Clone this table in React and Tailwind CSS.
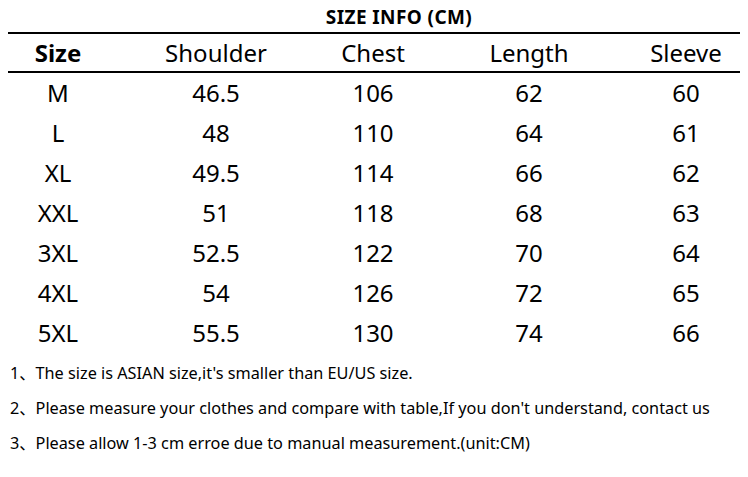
import React from 'react'

const rows = [
  ['M', '46.5', '106', '62', '60'],
  ['L', '48', '110', '64', '61'],
  ['XL', '49.5', '114', '66', '62'],
  ['XXL', '51', '118', '68', '63'],
  ['3XL', '52.5', '122', '70', '64'],
  ['4XL', '54', '126', '72', '65'],
  ['5XL', '55.5', '130', '74', '66'],
]

const headers = ['Size', 'Shoulder', 'Chest', 'Length', 'Sleeve']

const notes = [
  "1、The size is ASIAN size,it's smaller than EU/US size.",
  "2、Please measure your clothes and compare with table,If you don't understand, contact us",
  '3、Please allow 1-3 cm erroe due to manual measurement.(unit:CM)',
]

const cols = 'grid grid-cols-[100px_216px_98px_214px_100px]'

export default function App() {
  return (
    <div
      className="w-[748px] h-[477px] bg-white text-black overflow-hidden"
      style={{ fontFamily: '"Noto Sans", "Noto Sans CJK SC", sans-serif' }}
    >
      {/* title */}
      <div className="h-[32px] flex items-center justify-center pl-[50px] pt-[2px]">
        <span className="text-[19px] font-bold tracking-[0.4px] leading-none">SIZE INFO (CM)</span>
      </div>

      {/* table */}
      <div className="mx-[8px] w-[732px]">
        <div className={`${cols} h-[41px] items-center border-t-2 border-b-2 border-black`}>
          {headers.map((h, i) => (
            <div key={h} className={`text-center text-[24px] leading-none ${i === 0 ? 'font-bold' : ''}`}>
              {h}
            </div>
          ))}
        </div>
        {rows.map(r => (
          <div key={r[0]} className={`${cols} h-[40px] items-center`}>
            {r.map((c, i) => (
              <div key={i} className="text-center text-[24px] leading-none">
                {c}
              </div>
            ))}
          </div>
        ))}
      </div>

      {/* notes */}
      <div className="pl-[10px] mt-[10px] flex flex-col gap-[15px] text-[16.25px] leading-[20px]">
        {notes.map(n => (
          <div key={n}>{n}</div>
        ))}
      </div>
    </div>
  )
}
